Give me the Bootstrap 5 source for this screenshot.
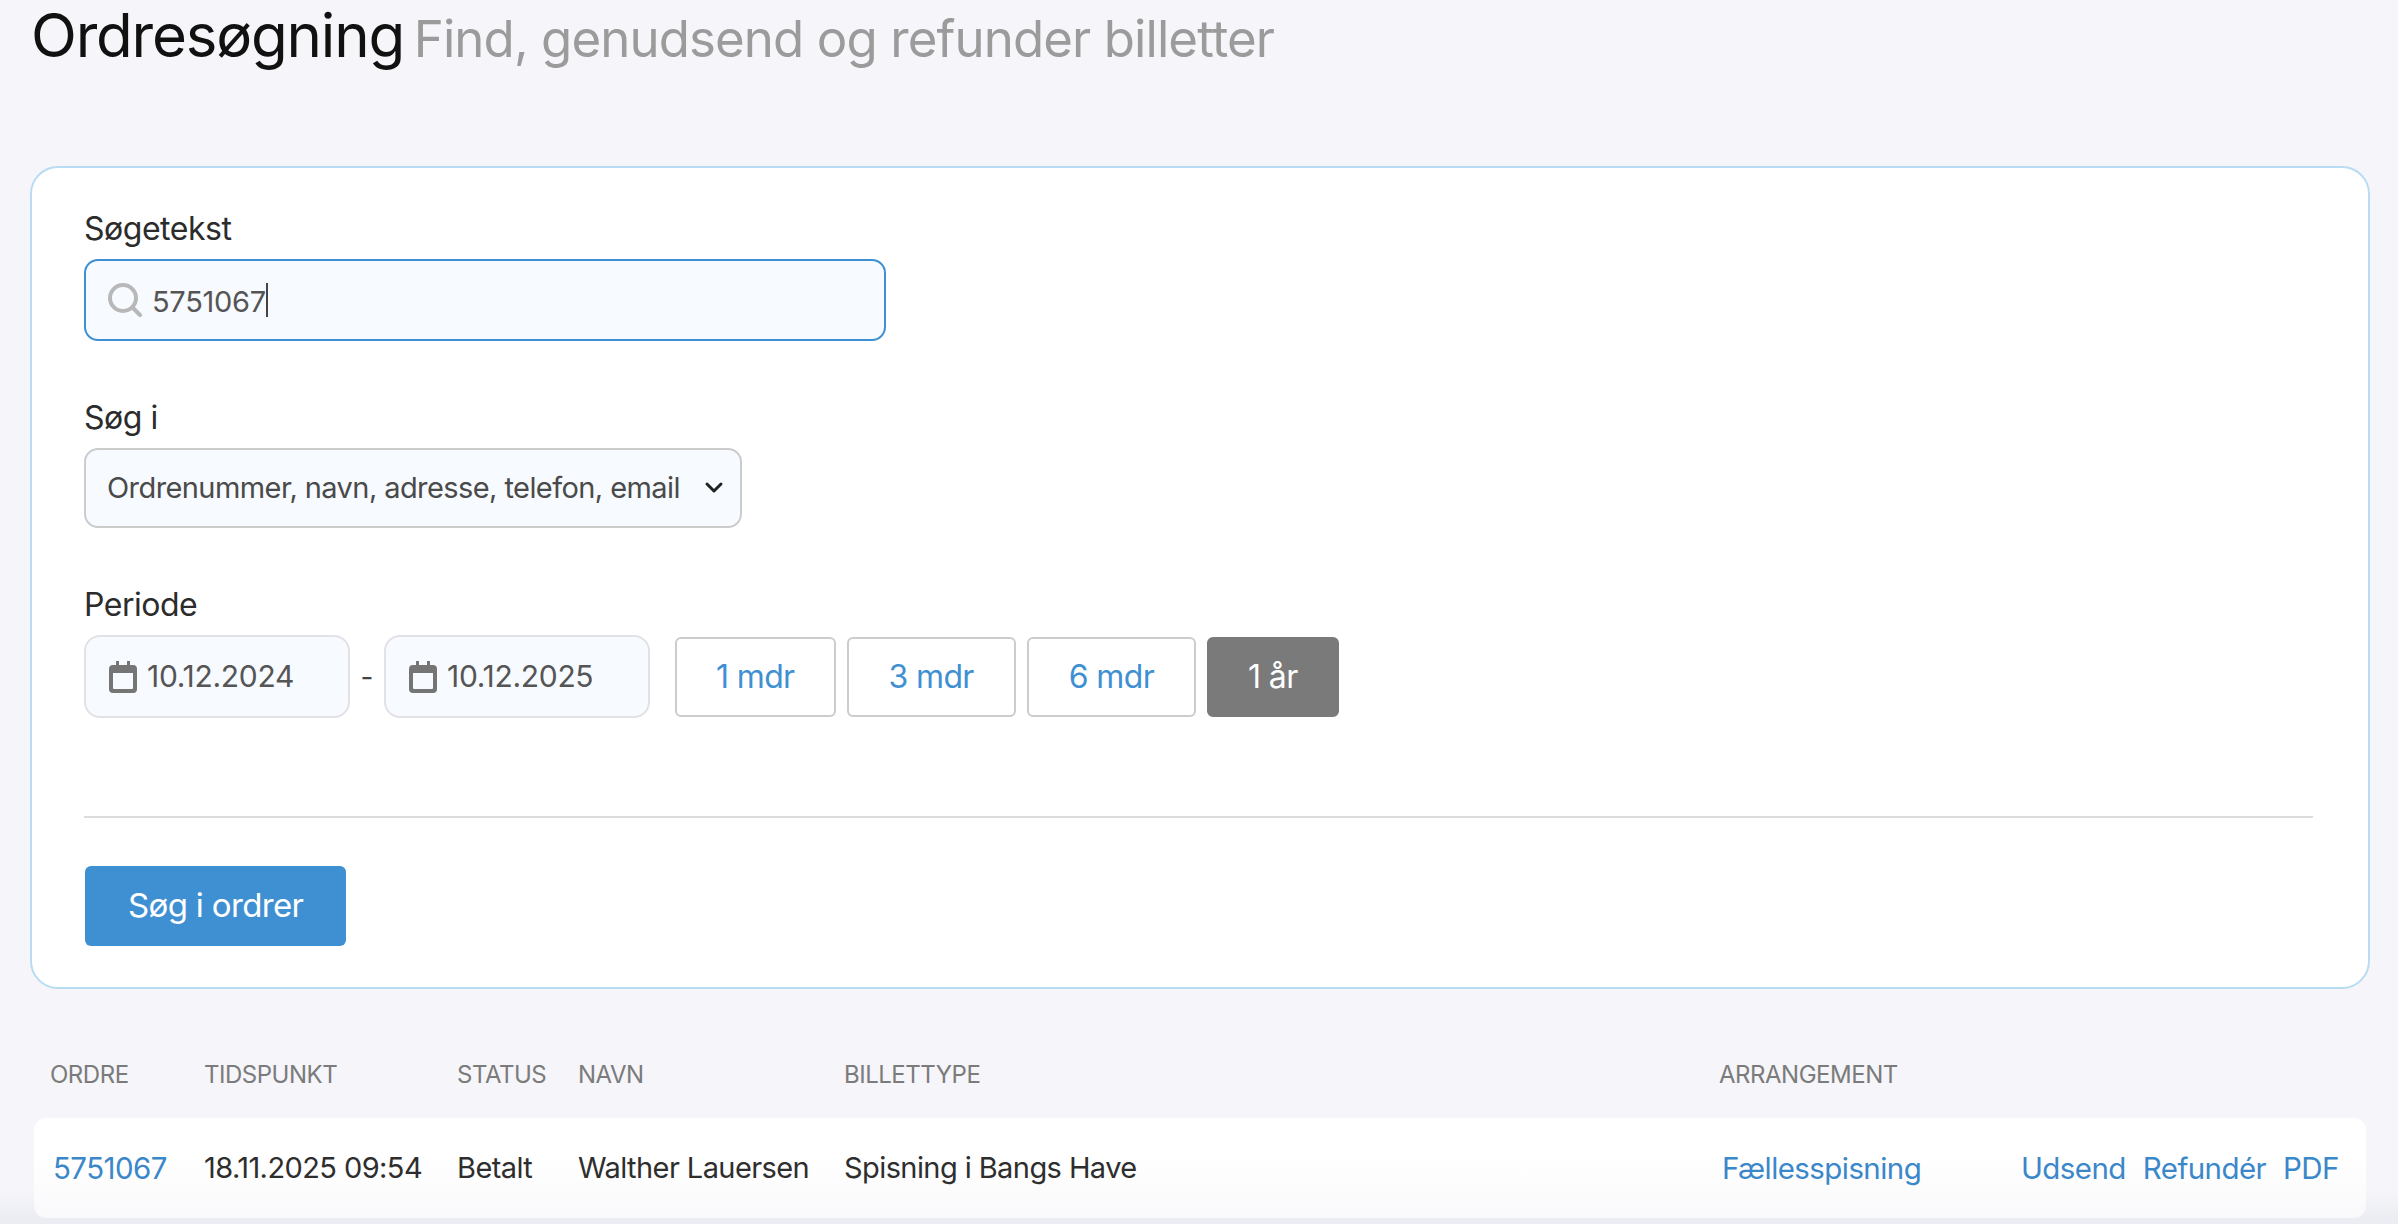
<!DOCTYPE html>
<html lang="da">
<head>
  <meta charset="UTF-8">
  <title>Ordresøgning</title>
  <link href="https://cdn.jsdelivr.net/npm/bootstrap@5.3.0/dist/css/bootstrap.min.css" rel="stylesheet">
  <style>
    body {
      background: linear-gradient(#f5f5fa 1190px, #ecedf2 1218px);
      font-family: Inter, "Liberation Sans", sans-serif;
      color: #2c2c2c;
      height: 1224px;
      overflow: hidden;
    }
    .page-wrap {
      padding: 0 28px 0 30px;
    }
    .page-title {
      margin: 0 0 96px 1px;
      height: 70px;
      line-height: 70px;
      font-size: 60px;
      font-weight: 400;
      letter-spacing: -0.02em;
      color: #111;
    }
    .page-title small {
      margin-left: -6px;
      font-size: 51px;
      color: #9b9b9b;
      letter-spacing: -0.018em;
    }
    .search-box {
      background: #fff;
      border: 2px solid #b8dcf2;
      border-radius: 28px;
      padding: 41px 55px 41px 52px;
    }
    .field-label {
      display: block;
      margin: 0 0 10px;
      line-height: 40px;
      font-size: 32px;
      letter-spacing: -0.015em;
      color: #2c2c2c;
    }
    .field-group {
      margin-bottom: 57px;
    }
    .text-field {
      width: 802px;
      height: 82px;
      padding: 0 20px 0 22px;
      gap: 10px;
      background: #f7fafe;
      border: 2px solid #3f90d3;
      border-radius: 14px;
      font-size: 29px;
      letter-spacing: -0.01em;
      color: #555;
    }
    .text-field span {
      padding-top: 3px;
    }
    .text-field .fake-caret {
      width: 2px;
      height: 34px;
      padding: 0;
      margin-left: -10px;
      background: #444;
    }
    .area-select.form-select {
      width: 658px;
      height: 80px;
      padding: 0 50px 0 21px;
      font-size: 29px;
      letter-spacing: -0.02em;
      color: #4a4a4a;
      background-color: #f7fafe;
      background-image: url("data:image/svg+xml,%3csvg xmlns='http://www.w3.org/2000/svg' viewBox='0 0 20 14'%3e%3cpath fill='none' stroke='%23222' stroke-width='3' stroke-linecap='round' stroke-linejoin='round' d='M3 3l7 7 7-7'/%3e%3c/svg%3e");
      background-position: right 16px center;
      background-size: 20px 14px;
      border: 2px solid #ccc;
      border-radius: 14px;
    }
    .period-row {
      margin-bottom: 98px;
    }
    .date-field {
      width: 266px;
      height: 83px;
      padding: 0 0 0 23px;
      gap: 10px;
      background: #f7fafe;
      border: 2px solid #e2e2e6;
      border-radius: 16px;
    }
    .date-field input {
      width: 170px;
      padding: 0;
      border: 0;
      outline: 0;
      background: transparent;
      font-family: inherit;
      font-size: 30px;
      letter-spacing: -0.01em;
      color: #555;
    }
    .date-sep {
      width: 34px;
      text-align: center;
      font-size: 28px;
      color: #444;
    }
    .range-btns {
      margin-left: 25px;
      gap: 11px;
    }
    .range-btn.btn {
      height: 80px;
      padding: 0 39px;
      font-size: 32px;
      letter-spacing: -0.02em;
      color: #3f90d3;
      background: #fff;
      border: 2px solid #ccc;
      border-radius: 6px;
    }
    .range-btn.btn.is-wide {
      padding: 0 40px;
    }
    .range-btn.btn.is-active {
      color: #fff;
      background: #7a7a7a;
      border-color: #7a7a7a;
    }
    .box-rule {
      margin: 0 0 48px;
      border: 0;
      border-top: 2px solid #dcdcdc;
      opacity: 1;
    }
    .go-btn.btn {
      height: 80px;
      margin-left: 1px;
      padding: 0 43px;
      font-size: 33px;
      letter-spacing: -0.02em;
      color: #fff;
      background: #3f90d3;
      border: 0;
      border-radius: 6px;
    }
    .orders-grid {
      display: grid;
      grid-template-columns: 154px 253px 121px 266px 875px 302px 1fr;
      padding-left: 16px;
      margin: 0 4px;
      align-items: center;
    }
    .orders-head {
      margin-top: 66px;
      margin-bottom: 23px;
      height: 40px;
      font-size: 24px;
      letter-spacing: -0.02em;
      color: #7b7b7b;
      text-transform: uppercase;
    }
    .orders-row {
      height: 100px;
      font-size: 29px;
      letter-spacing: -0.02em;
      color: #2e2e2e;
      background: linear-gradient(#fff 40%, #f9f9fb);
      border-radius: 12px;
    }
    .orders-row a {
      font-size: 29.5px;
      color: #3a87c9;
      text-decoration: none;
    }
    .order-link {
      margin-left: 3px;
    }
    .row-actions {
      gap: 17px;
    }
  </style>
</head>
<body>
  <div class="page-wrap">
    <h1 class="page-title">Ordresøgning <small>Find, genudsend og refunder billetter</small></h1>

    <!-- Search form -->
    <form class="search-box">
      <div class="field-group">
        <label class="field-label">Søgetekst</label>
        <div class="text-field d-flex align-items-center">
          <svg width="34" height="34" viewBox="0 0 34 34" fill="none" stroke="#b8b8b8" stroke-width="4" stroke-linecap="round">
            <circle cx="15" cy="15" r="13"/>
            <path d="M25 25l7 7"/>
          </svg>
          <span>5751067</span>
          <span class="fake-caret"></span>
        </div>
      </div>

      <div class="field-group">
        <label class="field-label">Søg i</label>
        <select class="form-select area-select">
          <option>Ordrenummer, navn, adresse, telefon, email</option>
        </select>
      </div>

      <label class="field-label">Periode</label>
      <div class="period-row d-flex align-items-center">
        <div class="date-field d-flex align-items-center">
          <svg width="28" height="32" viewBox="0 0 28 32" fill="#757575">
            <path d="M7 0h3v4h8V0h3v4h3a4 4 0 0 1 4 4v20a4 4 0 0 1-4 4H4a4 4 0 0 1-4-4V8a4 4 0 0 1 4-4h3zM4 12v15a1 1 0 0 0 1 1h18a1 1 0 0 0 1-1V12z"/>
          </svg>
          <input type="text" value="10.12.2024">
        </div>
        <span class="date-sep">-</span>
        <div class="date-field d-flex align-items-center">
          <svg width="28" height="32" viewBox="0 0 28 32" fill="#757575">
            <path d="M7 0h3v4h8V0h3v4h3a4 4 0 0 1 4 4v20a4 4 0 0 1-4 4H4a4 4 0 0 1-4-4V8a4 4 0 0 1 4-4h3zM4 12v15a1 1 0 0 0 1 1h18a1 1 0 0 0 1-1V12z"/>
          </svg>
          <input type="text" value="10.12.2025">
        </div>
        <div class="range-btns d-flex">
          <button type="button" class="btn range-btn">1 mdr</button>
          <button type="button" class="btn range-btn is-wide">3 mdr</button>
          <button type="button" class="btn range-btn is-wide">6 mdr</button>
          <button type="button" class="btn range-btn is-active">1 år</button>
        </div>
      </div>

      <hr class="box-rule">
      <button type="button" class="btn go-btn">Søg i ordrer</button>
    </form>

    <!-- Results -->
    <div class="orders-grid orders-head">
      <div>Ordre</div>
      <div>Tidspunkt</div>
      <div>Status</div>
      <div>Navn</div>
      <div>Billettype</div>
      <div>Arrangement</div>
      <div></div>
    </div>
    <div class="orders-grid orders-row">
      <div><a class="order-link" href="#">5751067</a></div>
      <div>18.11.2025 09:54</div>
      <div>Betalt</div>
      <div>Walther Lauersen</div>
      <div>Spisning i Bangs Have</div>
      <div><a class="order-link" href="#">Fællesspisning</a></div>
      <div class="row-actions d-flex">
        <a href="#">Udsend</a>
        <a href="#">Refundér</a>
        <a href="#">PDF</a>
      </div>
    </div>
  </div>
</body>
</html>
